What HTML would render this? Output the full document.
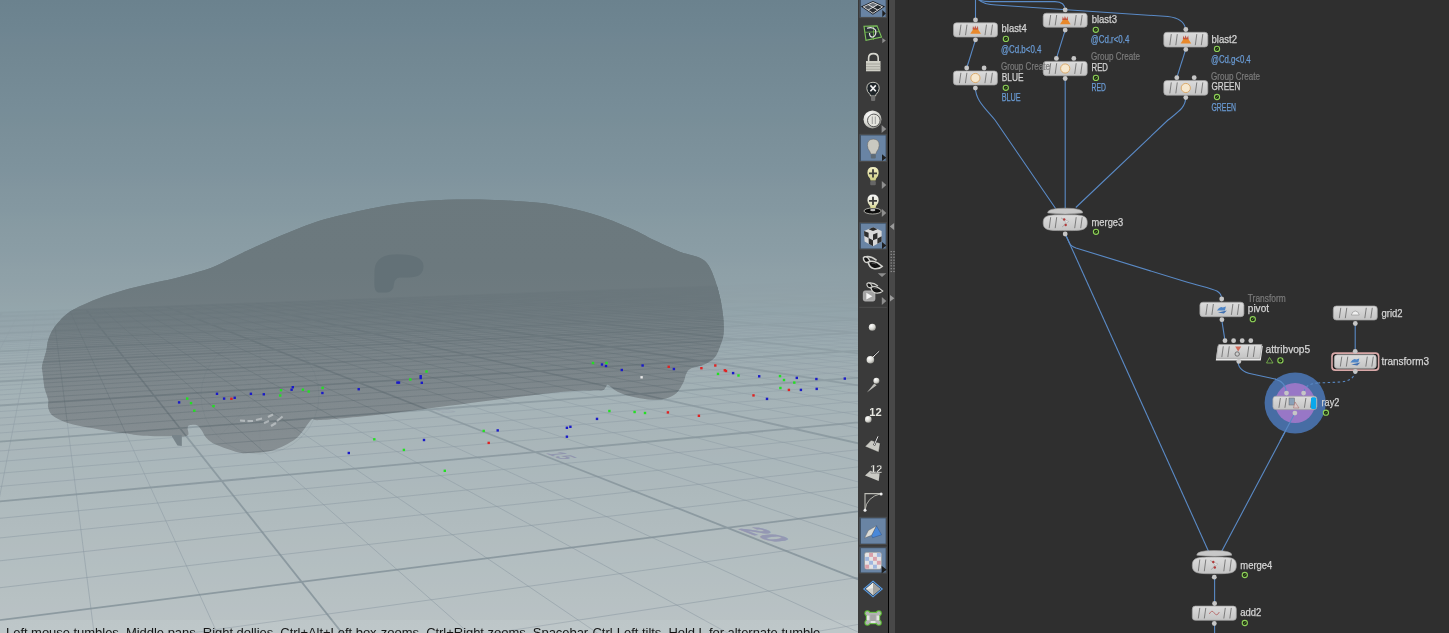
<!DOCTYPE html>
<html><head><meta charset="utf-8">
<style>
html,body{margin:0;padding:0;width:1449px;height:633px;overflow:hidden;background:#2f2f2f;font-family:"Liberation Sans",sans-serif;}
#vp{position:absolute;left:0;top:0;width:858px;height:633px;overflow:hidden;
 background:linear-gradient(to bottom,#6b828e 0px,#7d929c 160px,#8fa1a8 280px,#a5b3b7 400px,#b9c3c5 633px);}
#vp svg{position:absolute;left:0;top:0;}
#status{position:absolute;left:6px;top:624.5px;font-size:13px;color:#151515;white-space:nowrap;letter-spacing:-0.035px;will-change:transform;}
#tb{position:absolute;left:858px;top:0;width:30px;height:633px;background:#3a3a3a;}
#tbline{position:absolute;left:887.9px;top:0;width:1.2px;height:633px;background:#000;}
#strip{position:absolute;left:889px;top:0;width:5.9px;height:633px;background:#484848;}
#ng{position:absolute;left:895px;top:0;width:554px;height:633px;background:#2f2f2f;overflow:hidden;}
#ng svg{position:absolute;left:-895px;top:0;will-change:transform;}
.lbl{font-size:10px;fill:#d4d4d4;stroke:#d4d4d4;stroke-width:0.25px;}
.lblb{font-size:10px;fill:#6a9bd4;stroke:#6a9bd4;stroke-width:0.25px;}
.lblg{font-size:10px;fill:#7c7c7c;stroke:#7c7c7c;stroke-width:0.2px;}
</style></head><body>
<div id="vp">
<svg width="858" height="633" viewBox="0 0 858 633">
<defs><linearGradient id="bgG" gradientUnits="userSpaceOnUse" x1="0" y1="0" x2="0" y2="633"><stop offset="0.0000" stop-color="#6b828e"/><stop offset="0.0158" stop-color="#6c838f"/><stop offset="0.0316" stop-color="#6d8490"/><stop offset="0.0474" stop-color="#6e8591"/><stop offset="0.0632" stop-color="#708692"/><stop offset="0.0790" stop-color="#718792"/><stop offset="0.0948" stop-color="#728893"/><stop offset="0.1106" stop-color="#738994"/><stop offset="0.1264" stop-color="#748a95"/><stop offset="0.1422" stop-color="#758b96"/><stop offset="0.1580" stop-color="#768c97"/><stop offset="0.1738" stop-color="#778d98"/><stop offset="0.1896" stop-color="#788e98"/><stop offset="0.2054" stop-color="#7a8f99"/><stop offset="0.2212" stop-color="#7b909a"/><stop offset="0.2370" stop-color="#7c919b"/><stop offset="0.2528" stop-color="#7d929c"/><stop offset="0.2686" stop-color="#7e939d"/><stop offset="0.2844" stop-color="#80949e"/><stop offset="0.3002" stop-color="#82969f"/><stop offset="0.3160" stop-color="#8397a0"/><stop offset="0.3318" stop-color="#8498a1"/><stop offset="0.3476" stop-color="#869aa2"/><stop offset="0.3633" stop-color="#889ba3"/><stop offset="0.3791" stop-color="#899ca4"/><stop offset="0.3949" stop-color="#8a9da5"/><stop offset="0.4107" stop-color="#8c9ea6"/><stop offset="0.4265" stop-color="#8ea0a7"/><stop offset="0.4423" stop-color="#8fa1a8"/><stop offset="0.4581" stop-color="#91a2a9"/><stop offset="0.4739" stop-color="#93a4aa"/><stop offset="0.4897" stop-color="#94a6ac"/><stop offset="0.5055" stop-color="#96a7ad"/><stop offset="0.5213" stop-color="#98a8ae"/><stop offset="0.5371" stop-color="#9aaab0"/><stop offset="0.5529" stop-color="#9cacb1"/><stop offset="0.5687" stop-color="#9eadb2"/><stop offset="0.5845" stop-color="#a0aeb3"/><stop offset="0.6003" stop-color="#a1b0b4"/><stop offset="0.6161" stop-color="#a3b2b6"/><stop offset="0.6319" stop-color="#a5b3b7"/><stop offset="0.6477" stop-color="#a6b4b8"/><stop offset="0.6635" stop-color="#a7b4b8"/><stop offset="0.6793" stop-color="#a8b5b9"/><stop offset="0.6951" stop-color="#a9b6b9"/><stop offset="0.7109" stop-color="#aab6ba"/><stop offset="0.7267" stop-color="#aab7bb"/><stop offset="0.7425" stop-color="#abb8bb"/><stop offset="0.7583" stop-color="#acb8bc"/><stop offset="0.7741" stop-color="#adb9bc"/><stop offset="0.7899" stop-color="#aebabd"/><stop offset="0.8057" stop-color="#afbbbe"/><stop offset="0.8215" stop-color="#b0bbbe"/><stop offset="0.8373" stop-color="#b1bcbf"/><stop offset="0.8531" stop-color="#b2bdbf"/><stop offset="0.8689" stop-color="#b3bdc0"/><stop offset="0.8847" stop-color="#b3bec1"/><stop offset="0.9005" stop-color="#b4bfc1"/><stop offset="0.9163" stop-color="#b5bfc2"/><stop offset="0.9321" stop-color="#b6c0c2"/><stop offset="0.9479" stop-color="#b7c1c3"/><stop offset="0.9637" stop-color="#b8c1c4"/><stop offset="0.9795" stop-color="#b9c2c4"/><stop offset="0.9953" stop-color="#bac3c5"/></linearGradient><linearGradient id="fogG" gradientUnits="userSpaceOnUse" x1="0" y1="0" x2="0" y2="633"><stop offset="0.0000" stop-color="#6b828e" stop-opacity="1.000"/><stop offset="0.0158" stop-color="#6c838f" stop-opacity="1.000"/><stop offset="0.0316" stop-color="#6d8490" stop-opacity="1.000"/><stop offset="0.0474" stop-color="#6e8591" stop-opacity="1.000"/><stop offset="0.0632" stop-color="#708692" stop-opacity="1.000"/><stop offset="0.0790" stop-color="#718792" stop-opacity="1.000"/><stop offset="0.0948" stop-color="#728893" stop-opacity="1.000"/><stop offset="0.1106" stop-color="#738994" stop-opacity="1.000"/><stop offset="0.1264" stop-color="#748a95" stop-opacity="1.000"/><stop offset="0.1422" stop-color="#758b96" stop-opacity="1.000"/><stop offset="0.1580" stop-color="#768c97" stop-opacity="1.000"/><stop offset="0.1738" stop-color="#778d98" stop-opacity="1.000"/><stop offset="0.1896" stop-color="#788e98" stop-opacity="1.000"/><stop offset="0.2054" stop-color="#7a8f99" stop-opacity="1.000"/><stop offset="0.2212" stop-color="#7b909a" stop-opacity="1.000"/><stop offset="0.2370" stop-color="#7c919b" stop-opacity="1.000"/><stop offset="0.2528" stop-color="#7d929c" stop-opacity="1.000"/><stop offset="0.2686" stop-color="#7e939d" stop-opacity="1.000"/><stop offset="0.2844" stop-color="#80949e" stop-opacity="1.000"/><stop offset="0.3002" stop-color="#82969f" stop-opacity="1.000"/><stop offset="0.3160" stop-color="#8397a0" stop-opacity="1.000"/><stop offset="0.3318" stop-color="#8498a1" stop-opacity="1.000"/><stop offset="0.3476" stop-color="#869aa2" stop-opacity="1.000"/><stop offset="0.3633" stop-color="#889ba3" stop-opacity="1.000"/><stop offset="0.3791" stop-color="#899ca4" stop-opacity="1.000"/><stop offset="0.3949" stop-color="#8a9da5" stop-opacity="1.000"/><stop offset="0.4107" stop-color="#8c9ea6" stop-opacity="1.000"/><stop offset="0.4265" stop-color="#8ea0a7" stop-opacity="1.000"/><stop offset="0.4423" stop-color="#8fa1a8" stop-opacity="0.965"/><stop offset="0.4581" stop-color="#91a2a9" stop-opacity="0.930"/><stop offset="0.4739" stop-color="#93a4aa" stop-opacity="0.870"/><stop offset="0.4897" stop-color="#94a6ac" stop-opacity="0.787"/><stop offset="0.5055" stop-color="#96a7ad" stop-opacity="0.680"/><stop offset="0.5213" stop-color="#98a8ae" stop-opacity="0.593"/><stop offset="0.5371" stop-color="#9aaab0" stop-opacity="0.518"/><stop offset="0.5529" stop-color="#9cacb1" stop-opacity="0.453"/><stop offset="0.5687" stop-color="#9eadb2" stop-opacity="0.402"/><stop offset="0.5845" stop-color="#a0aeb3" stop-opacity="0.367"/><stop offset="0.6003" stop-color="#a1b0b4" stop-opacity="0.331"/><stop offset="0.6161" stop-color="#a3b2b6" stop-opacity="0.296"/><stop offset="0.6319" stop-color="#a5b3b7" stop-opacity="0.260"/><stop offset="0.6477" stop-color="#a6b4b8" stop-opacity="0.236"/><stop offset="0.6635" stop-color="#a7b4b8" stop-opacity="0.212"/><stop offset="0.6793" stop-color="#a8b5b9" stop-opacity="0.188"/><stop offset="0.6951" stop-color="#a9b6b9" stop-opacity="0.164"/><stop offset="0.7109" stop-color="#aab6ba" stop-opacity="0.140"/><stop offset="0.7267" stop-color="#aab7bb" stop-opacity="0.127"/><stop offset="0.7425" stop-color="#abb8bb" stop-opacity="0.114"/><stop offset="0.7583" stop-color="#acb8bc" stop-opacity="0.101"/><stop offset="0.7741" stop-color="#adb9bc" stop-opacity="0.089"/><stop offset="0.7899" stop-color="#aebabd" stop-opacity="0.076"/><stop offset="0.8057" stop-color="#afbbbe" stop-opacity="0.063"/><stop offset="0.8215" stop-color="#b0bbbe" stop-opacity="0.050"/><stop offset="0.8373" stop-color="#b1bcbf" stop-opacity="0.042"/><stop offset="0.8531" stop-color="#b2bdbf" stop-opacity="0.033"/><stop offset="0.8689" stop-color="#b3bdc0" stop-opacity="0.025"/><stop offset="0.8847" stop-color="#b3bec1" stop-opacity="0.017"/><stop offset="0.9005" stop-color="#b4bfc1" stop-opacity="0.008"/><stop offset="0.9163" stop-color="#b5bfc2" stop-opacity="0.000"/><stop offset="0.9321" stop-color="#b6c0c2" stop-opacity="0.000"/><stop offset="0.9479" stop-color="#b7c1c3" stop-opacity="0.000"/><stop offset="0.9637" stop-color="#b8c1c4" stop-opacity="0.000"/><stop offset="0.9795" stop-color="#b9c2c4" stop-opacity="0.000"/><stop offset="0.9953" stop-color="#bac3c5" stop-opacity="0.000"/></linearGradient>
<linearGradient id="carG" gradientUnits="userSpaceOnUse" x1="0" y1="200" x2="0" y2="455"><stop offset="0" stop-color="#66757a"/><stop offset="0.35" stop-color="#6c797e"/><stop offset="0.6" stop-color="#7a8489"/><stop offset="1" stop-color="#878f93"/></linearGradient>
<linearGradient id="carFog" gradientUnits="userSpaceOnUse" x1="0" y1="0" x2="0" y2="633"><stop offset="0" stop-color="#6a787d" stop-opacity="1"/><stop offset="0.4265" stop-color="#6c797e" stop-opacity="1"/><stop offset="0.4739" stop-color="#6f7b80" stop-opacity="0.75"/><stop offset="0.5371" stop-color="#768186" stop-opacity="0.35"/><stop offset="0.6319" stop-color="#7e888c" stop-opacity="0.1"/><stop offset="0.6951" stop-color="#818a8e" stop-opacity="0"/></linearGradient>
<clipPath id="carClip"><path d="M42.1,365.7C42.8,362.0 45.5,353.9 46.4,350.0C47.3,346.1 46.8,345.0 47.6,342.0C48.4,339.0 49.7,335.0 51.4,331.9C53.1,328.8 55.2,326.1 57.7,323.1C60.2,320.2 63.0,316.9 66.6,314.2C70.2,311.4 73.9,309.2 79.2,306.6C84.5,304.0 90.8,301.1 98.2,298.4C105.6,295.7 115.1,292.6 123.5,290.2C131.9,287.8 140.1,285.9 148.7,283.9C157.3,281.9 167.1,280.1 175.0,278.2C182.9,276.3 189.8,274.3 196.0,272.5C202.2,270.7 206.0,269.9 212.0,267.5C218.0,265.1 224.7,261.5 232.0,258.0C239.3,254.5 244.5,251.6 255.6,246.7C266.7,241.8 285.9,233.3 298.4,228.5C310.9,223.7 316.2,221.6 330.5,217.8C344.8,214.1 368.0,208.8 384.0,206.0C400.0,203.2 410.7,201.8 426.7,200.7C442.7,199.6 461.8,199.3 480.0,199.6C498.2,199.9 521.3,201.1 536.0,202.5C550.7,203.9 557.3,205.5 568.0,207.8C578.7,210.1 589.3,212.8 600.0,216.3C610.7,219.9 623.1,225.2 632.0,229.1C640.9,233.0 646.2,236.4 653.3,239.8C660.4,243.2 669.3,247.1 674.6,249.4C679.9,251.7 681.0,252.2 685.3,253.6C689.6,255.0 696.3,255.9 700.2,257.9C704.1,259.9 706.2,261.7 708.7,265.4C711.2,269.1 713.2,275.0 715.1,280.3C717.0,285.6 718.6,291.3 720.0,297.4C721.4,303.5 722.6,310.9 723.2,317.0C723.8,323.1 724.2,328.9 723.6,334.0C723.0,339.1 721.2,343.4 719.6,347.4C718.0,351.4 716.9,355.1 714.2,358.0C711.5,360.9 707.5,363.0 703.5,364.8C699.5,366.6 692.9,367.3 690.0,368.9C687.1,370.5 687.1,372.0 686.0,374.2C684.9,376.4 685.0,379.2 683.4,382.3C681.8,385.4 679.5,390.3 676.6,393.0C673.7,395.7 670.0,397.3 666.0,398.4C662.0,399.5 657.9,399.9 652.5,399.7C647.1,399.5 639.5,398.3 633.7,397.0C627.9,395.7 621.9,393.7 617.6,391.7C613.4,389.7 610.2,385.7 608.2,385.0C606.2,384.3 606.4,386.7 605.5,387.6C604.6,388.5 604.8,389.9 602.8,390.3C600.8,390.8 601.2,389.9 593.4,390.3C585.6,390.7 576.5,390.5 556.0,392.6C535.5,394.7 499.1,399.4 470.6,403.0C442.1,406.6 409.9,411.2 385.0,414.0C360.1,416.8 333.0,419.2 321.0,420.0C309.0,420.8 315.2,418.2 313.0,418.8C310.8,419.4 310.9,420.4 308.0,423.8C305.1,427.2 301.3,434.6 295.4,439.0C289.5,443.4 280.2,448.1 272.6,450.4C265.0,452.7 255.8,452.7 250.0,453.0C244.2,453.3 243.7,453.7 238.0,452.3C232.3,450.9 221.1,446.9 215.8,444.5C210.5,442.1 208.8,440.3 206.4,437.9C204.0,435.5 203.2,432.4 201.6,430.3C200.0,428.2 198.9,426.2 196.9,425.3C194.9,424.4 191.1,424.8 189.5,425.2C187.9,425.6 187.9,426.3 187.6,428.0C187.2,429.7 189.9,434.1 187.4,435.5C184.9,436.9 179.8,436.3 172.5,436.3C165.2,436.3 151.4,436.2 143.4,435.7C135.4,435.2 131.9,434.2 124.5,433.2C117.1,432.1 107.0,430.7 99.2,429.4C91.4,428.1 84.0,427.1 77.7,425.6C71.4,424.1 65.7,422.4 61.3,420.5C56.9,418.6 53.4,416.5 51.2,414.2C49.0,411.9 48.5,408.9 48.0,406.6C47.5,404.3 48.8,403.2 48.3,400.3C47.8,397.4 45.6,392.1 44.8,389.0C44.0,385.9 44.0,384.2 43.6,381.4C43.2,378.6 42.8,374.6 42.5,372.0C42.2,369.4 41.5,369.4 42.1,365.7Z"/></clipPath>
</defs>
<rect x="0" y="0" width="858" height="633" fill="url(#bgG)"/>
<path d="M1074.8,273.5L-1163.7,356.4 M1085.2,273.6L-1188.0,358.3 M1095.9,273.8L-1213.2,360.3 M1106.7,273.9L-1239.6,362.4 M1129.2,274.2L-1295.6,366.9 M1140.8,274.4L-1325.5,369.3 M1152.6,274.5L-1356.8,371.8 M1164.7,274.7L-1389.5,374.4 M1189.7,275.0L-1459.8,380.1 M1202.6,275.2L-1497.5,383.1 M1215.8,275.4L-1537.3,386.3 M1229.4,275.6L-1579.1,389.6 M1257.4,276.0L-1669.7,396.9 M1271.9,276.2L-1718.9,400.8 M1286.7,276.4L-1771.0,405.0 M1302.0,276.6L-1826.3,409.4 M1333.6,277.0L-1947.6,419.1 M1350.0,277.2L-2014.3,424.4 M1366.8,277.4L-2085.7,430.1 M1384.0,277.7L-2162.2,436.2 M1420.0,278.2L-2332.9,449.9 M1438.7,278.4L-2428.5,457.5 M1457.9,278.7L-2532.2,465.8 M1477.6,278.9L-2644.9,474.9 M1518.8,279.5L-2902.7,495.5 M1540.3,279.8L-2995.1,504.6 M1562.5,280.1L-2979.9,508.6 M1585.3,280.4L-2993.1,514.4 M1633.0,281.0L-2990.8,525.3 M1658.0,281.4L-2973.7,530.5 M1683.8,281.7L-2988.3,537.7 M1710.5,282.1L-2970.0,543.5 M1766.4,282.8L-2965.9,558.2 M1795.9,283.2L-2982.2,567.5 M1826.3,283.7L-2999.9,577.5 M1857.8,284.1L-2978.5,585.8 M1924.3,285.0L-2974.1,607.1 M1959.5,285.5L-2994.4,620.7 M1995.9,285.9L-2969.0,632.3 M2033.8,286.5L-2991.0,648.4 M2114.2,287.5L-2986.7,681.9 M2156.8,288.1L-2955.3,699.0 M2201.3,288.7L-2981.5,723.1 M2247.6,289.4L-2946.0,744.6 M2346.7,290.7L-2934.1,802.9 M2399.6,291.4L-2966.5,842.7 M2455.0,292.2L-2918.3,880.1 M2513.1,292.9L-2954.9,934.4 M2638.1,294.6L-2938.4,1065.7 M2705.5,295.5L-2991.4,1164.9 M2776.4,296.5L-2912.7,1269.1 M2851.3,297.5L-2978.4,1436.0 M3014.1,299.7L-2953.0,1966.2 M3102.7,300.9L-2767.3,2422.6 M3196.9,302.2L-2881.2,3466.1 M3297.0,303.5L-370.5,3823.3 M3517.6,306.5L3991.8,881.1 M3639.6,308.2L3998.0,505.3 M3770.4,309.9L3999.9,390.4 M3911.1,311.8L3998.6,334.1 M1056.4,273.7L3993.2,314.6 M1048.1,274.0L3962.4,315.8 M1039.9,274.3L3969.9,317.5 M1031.5,274.6L3977.6,319.4 M1014.7,275.2L3993.6,323.2 M1006.2,275.5L3960.9,324.5 M997.6,275.8L3968.8,326.5 M989.0,276.1L3977.0,328.6 M971.5,276.8L3994.1,332.9 M962.7,277.1L3959.2,334.4 M953.8,277.4L3967.7,336.7 M944.9,277.8L3976.4,339.1 M926.8,278.4L3994.7,344.1 M917.6,278.8L3957.3,345.7 M908.4,279.1L3966.3,348.3 M899.1,279.4L3975.6,351.1 M880.4,280.1L3995.3,356.9 M870.9,280.5L3955.1,358.6 M861.3,280.8L3964.8,361.8 M851.7,281.2L3974.8,365.0 M832.2,281.9L3996.0,371.8 M822.4,282.3L3952.5,373.8 M812.4,282.6L3963.0,377.4 M802.4,283.0L3973.8,381.2 M782.2,283.7L3996.9,389.3 M771.9,284.1L3949.5,391.6 M761.6,284.5L3960.8,396.0 M751.2,284.9L3972.6,400.5 M730.2,285.7L3997.9,410.3 M719.5,286.1L3945.9,412.9 M708.8,286.4L3958.2,418.2 M698.0,286.8L3971.2,423.8 M676.1,287.7L3999.1,435.8 M665.0,288.1L3941.5,438.9 M653.8,288.5L3955.1,445.5 M642.5,288.9L3969.5,452.4 M619.7,289.7L3921.6,463.3 M608.2,290.1L3936.0,471.2 M596.6,290.6L3951.2,479.6 M584.8,291.0L3967.3,488.5 M561.1,291.9L3912.9,502.3 M549.0,292.3L3928.9,512.5 M536.9,292.8L3946.1,523.5 M524.7,293.2L3964.5,535.2 M499.9,294.1L3901.4,553.4 M487.3,294.6L3919.7,567.2 M474.6,295.1L3939.3,582.2 M461.9,295.5L3960.6,598.3 M436.0,296.5L3885.7,623.3 M422.9,297.0L3906.8,643.0 M409.6,297.5L3929.8,664.6 M396.3,297.9L3955.2,688.3 M369.2,298.9L3862.9,725.0 M355.5,299.4L3887.8,755.1 M341.7,300.0L3915.5,788.7 M327.8,300.5L3946.8,826.6 M299.5,301.5L3826.8,886.1 M285.1,302.0L3856.8,937.5 M270.6,302.6L3891.5,997.0 M256.0,303.1L3932.2,1066.7 M226.4,304.2L3760.8,1180.7 M211.4,304.8L3797.4,1287.1 M196.2,305.3L3842.8,1419.0 M180.9,305.9L3900.5,1586.9 M149.8,307.0L3601.5,1891.2 M134.1,307.6L3637.6,2227.9 M118.2,308.2L3691.5,2730.5 M102.1,308.8L3780.5,3561.5 M69.5,310.0L1500.9,3441.7 M53.0,310.6L493.2,3768.9 M36.3,311.2L-561.7,3333.3 M19.4,311.8L-1703.0,3633.7 M-14.9,313.1L-2540.8,2516.2 M-32.2,313.7L-2974.5,2337.1 M-49.8,314.4L-2953.0,1966.2 M-67.5,315.0L-2938.3,1710.7 M-103.6,316.3L-2919.2,1381.4 M-121.9,317.0L-2912.7,1269.1 M-140.4,317.7L-2907.5,1178.4 M-159.1,318.4L-2903.1,1103.5 M-197.0,319.8L-2896.4,987.2 M-216.3,320.5L-2893.8,941.1 M-235.8,321.2L-2891.4,901.0 M-255.5,321.9L-2889.4,865.8 M-295.6,323.4L-2988.1,825.9 M-315.9,324.2L-2981.2,799.1 M-336.5,324.9L-2975.0,775.1 M-357.3,325.7L-2969.4,753.3 M-399.6,327.2L-2959.6,715.5 M-421.1,328.0L-2955.3,699.0 M-442.9,328.8L-2951.4,683.8 M-464.9,329.6L-2947.8,669.8 M-509.7,331.3L-2941.3,644.9 M-532.4,332.1L-2938.4,633.7 M-555.5,333.0L-2999.1,630.9 M-578.8,333.8L-2994.4,620.7 M-626.2,335.6L-2986.0,602.2 M-650.4,336.5L-2982.1,593.8 M-674.8,337.4L-2978.5,585.8 M-699.6,338.3L-2975.1,578.3 M-750.0,340.1L-2968.8,564.6 M-775.6,341.1L-2965.9,558.2 M-801.6,342.0L-2963.1,552.2 M-827.9,343.0L-2960.5,546.5 M-881.5,345.0L-2955.6,535.9 M-908.8,346.0L-2997.1,534.9 M-936.4,347.0L-2993.9,530.0 M-964.5,348.0L-2990.8,525.3 M-1021.6,350.1L-2985.1,516.6 M-1050.7,351.2L-2982.5,512.5 M-1080.2,352.3L-2979.9,508.6 M-1110.1,353.4L-2977.4,504.9" stroke="#8796a0" stroke-width="1" fill="none" opacity="0.5"/>
<path d="M1064.5,273.4L-1140.4,354.5 M1117.8,274.1L-1267.0,364.6 M1177.1,274.9L-1423.8,377.2 M1243.2,275.8L-1623.2,393.1 M1317.6,276.8L-1885.0,414.1 M1401.8,277.9L-2244.4,442.8 M1497.9,279.2L-2767.9,484.7 M1608.8,280.7L-2977.0,518.9 M1738.0,282.5L-2985.5,551.6 M1890.5,284.5L-2997.4,597.4 M2073.2,287.0L-2962.8,662.4 M2296.1,290.0L-2975.0,775.1 M2574.0,293.8L-2999.3,1000.2 M2930.4,298.6L-2867.6,1627.0 M3403.7,305.0L2943.6,3919.6 M1064.5,273.4L3985.5,312.9 M1023.1,274.9L3985.5,321.3 M980.3,276.5L3985.4,330.7 M935.9,278.1L3985.4,341.5 M889.8,279.8L3985.3,353.9 M842.0,281.5L3985.2,368.3 M792.3,283.4L3985.1,385.2 M740.7,285.3L3985.0,405.3 M687.1,287.2L3984.8,429.7 M631.2,289.3L3984.7,459.7 M573.0,291.4L3984.4,497.9 M512.3,293.7L3984.1,547.8 M449.0,296.0L3983.7,615.9 M382.8,298.4L3983.1,714.4 M313.7,301.0L3982.2,869.5 M241.3,303.7L3980.5,1149.6 M165.4,306.4L3976.5,1807.7 M85.9,309.4L2943.6,3919.6 M2.4,312.4L-2436.9,3234.8 M-85.5,315.7L-2927.4,1523.9 M-177.9,319.1L-2899.5,1040.7 M-275.4,322.7L-2995.9,855.9 M-378.3,326.5L-2964.3,733.6 M-487.1,330.5L-2944.4,656.9 M-602.4,334.7L-2990.1,611.2 M-724.6,339.2L-2971.8,571.3 M-854.5,344.0L-2958.0,541.0 M-992.8,349.1L-2987.9,520.9 M-1140.4,354.5L-2975.1,501.3" stroke="#7e8c94" stroke-width="1.8" fill="none" opacity="0.75"/>
<rect x="0" y="0" width="858" height="633" fill="url(#fogG)"/>
<path d="M42.1,365.7C42.8,362.0 45.5,353.9 46.4,350.0C47.3,346.1 46.8,345.0 47.6,342.0C48.4,339.0 49.7,335.0 51.4,331.9C53.1,328.8 55.2,326.1 57.7,323.1C60.2,320.2 63.0,316.9 66.6,314.2C70.2,311.4 73.9,309.2 79.2,306.6C84.5,304.0 90.8,301.1 98.2,298.4C105.6,295.7 115.1,292.6 123.5,290.2C131.9,287.8 140.1,285.9 148.7,283.9C157.3,281.9 167.1,280.1 175.0,278.2C182.9,276.3 189.8,274.3 196.0,272.5C202.2,270.7 206.0,269.9 212.0,267.5C218.0,265.1 224.7,261.5 232.0,258.0C239.3,254.5 244.5,251.6 255.6,246.7C266.7,241.8 285.9,233.3 298.4,228.5C310.9,223.7 316.2,221.6 330.5,217.8C344.8,214.1 368.0,208.8 384.0,206.0C400.0,203.2 410.7,201.8 426.7,200.7C442.7,199.6 461.8,199.3 480.0,199.6C498.2,199.9 521.3,201.1 536.0,202.5C550.7,203.9 557.3,205.5 568.0,207.8C578.7,210.1 589.3,212.8 600.0,216.3C610.7,219.9 623.1,225.2 632.0,229.1C640.9,233.0 646.2,236.4 653.3,239.8C660.4,243.2 669.3,247.1 674.6,249.4C679.9,251.7 681.0,252.2 685.3,253.6C689.6,255.0 696.3,255.9 700.2,257.9C704.1,259.9 706.2,261.7 708.7,265.4C711.2,269.1 713.2,275.0 715.1,280.3C717.0,285.6 718.6,291.3 720.0,297.4C721.4,303.5 722.6,310.9 723.2,317.0C723.8,323.1 724.2,328.9 723.6,334.0C723.0,339.1 721.2,343.4 719.6,347.4C718.0,351.4 716.9,355.1 714.2,358.0C711.5,360.9 707.5,363.0 703.5,364.8C699.5,366.6 692.9,367.3 690.0,368.9C687.1,370.5 687.1,372.0 686.0,374.2C684.9,376.4 685.0,379.2 683.4,382.3C681.8,385.4 679.5,390.3 676.6,393.0C673.7,395.7 670.0,397.3 666.0,398.4C662.0,399.5 657.9,399.9 652.5,399.7C647.1,399.5 639.5,398.3 633.7,397.0C627.9,395.7 621.9,393.7 617.6,391.7C613.4,389.7 610.2,385.7 608.2,385.0C606.2,384.3 606.4,386.7 605.5,387.6C604.6,388.5 604.8,389.9 602.8,390.3C600.8,390.8 601.2,389.9 593.4,390.3C585.6,390.7 576.5,390.5 556.0,392.6C535.5,394.7 499.1,399.4 470.6,403.0C442.1,406.6 409.9,411.2 385.0,414.0C360.1,416.8 333.0,419.2 321.0,420.0C309.0,420.8 315.2,418.2 313.0,418.8C310.8,419.4 310.9,420.4 308.0,423.8C305.1,427.2 301.3,434.6 295.4,439.0C289.5,443.4 280.2,448.1 272.6,450.4C265.0,452.7 255.8,452.7 250.0,453.0C244.2,453.3 243.7,453.7 238.0,452.3C232.3,450.9 221.1,446.9 215.8,444.5C210.5,442.1 208.8,440.3 206.4,437.9C204.0,435.5 203.2,432.4 201.6,430.3C200.0,428.2 198.9,426.2 196.9,425.3C194.9,424.4 191.1,424.8 189.5,425.2C187.9,425.6 187.9,426.3 187.6,428.0C187.2,429.7 189.9,434.1 187.4,435.5C184.9,436.9 179.8,436.3 172.5,436.3C165.2,436.3 151.4,436.2 143.4,435.7C135.4,435.2 131.9,434.2 124.5,433.2C117.1,432.1 107.0,430.7 99.2,429.4C91.4,428.1 84.0,427.1 77.7,425.6C71.4,424.1 65.7,422.4 61.3,420.5C56.9,418.6 53.4,416.5 51.2,414.2C49.0,411.9 48.5,408.9 48.0,406.6C47.5,404.3 48.8,403.2 48.3,400.3C47.8,397.4 45.6,392.1 44.8,389.0C44.0,385.9 44.0,384.2 43.6,381.4C43.2,378.6 42.8,374.6 42.5,372.0C42.2,369.4 41.5,369.4 42.1,365.7Z" fill="url(#carG)"/>
<g clip-path="url(#carClip)">
<path d="M1074.8,273.5L-1163.7,356.4 M1085.2,273.6L-1188.0,358.3 M1095.9,273.8L-1213.2,360.3 M1106.7,273.9L-1239.6,362.4 M1129.2,274.2L-1295.6,366.9 M1140.8,274.4L-1325.5,369.3 M1152.6,274.5L-1356.8,371.8 M1164.7,274.7L-1389.5,374.4 M1189.7,275.0L-1459.8,380.1 M1202.6,275.2L-1497.5,383.1 M1215.8,275.4L-1537.3,386.3 M1229.4,275.6L-1579.1,389.6 M1257.4,276.0L-1669.7,396.9 M1271.9,276.2L-1718.9,400.8 M1286.7,276.4L-1771.0,405.0 M1302.0,276.6L-1826.3,409.4 M1333.6,277.0L-1947.6,419.1 M1350.0,277.2L-2014.3,424.4 M1366.8,277.4L-2085.7,430.1 M1384.0,277.7L-2162.2,436.2 M1420.0,278.2L-2332.9,449.9 M1438.7,278.4L-2428.5,457.5 M1457.9,278.7L-2532.2,465.8 M1477.6,278.9L-2644.9,474.9 M1518.8,279.5L-2902.7,495.5 M1540.3,279.8L-2995.1,504.6 M1562.5,280.1L-2979.9,508.6 M1585.3,280.4L-2993.1,514.4 M1633.0,281.0L-2990.8,525.3 M1658.0,281.4L-2973.7,530.5 M1683.8,281.7L-2988.3,537.7 M1710.5,282.1L-2970.0,543.5 M1766.4,282.8L-2965.9,558.2 M1795.9,283.2L-2982.2,567.5 M1826.3,283.7L-2999.9,577.5 M1857.8,284.1L-2978.5,585.8 M1924.3,285.0L-2974.1,607.1 M1959.5,285.5L-2994.4,620.7 M1995.9,285.9L-2969.0,632.3 M2033.8,286.5L-2991.0,648.4 M2114.2,287.5L-2986.7,681.9 M2156.8,288.1L-2955.3,699.0 M2201.3,288.7L-2981.5,723.1 M2247.6,289.4L-2946.0,744.6 M2346.7,290.7L-2934.1,802.9 M2399.6,291.4L-2966.5,842.7 M2455.0,292.2L-2918.3,880.1 M2513.1,292.9L-2954.9,934.4 M2638.1,294.6L-2938.4,1065.7 M2705.5,295.5L-2991.4,1164.9 M2776.4,296.5L-2912.7,1269.1 M2851.3,297.5L-2978.4,1436.0 M3014.1,299.7L-2953.0,1966.2 M3102.7,300.9L-2767.3,2422.6 M3196.9,302.2L-2881.2,3466.1 M3297.0,303.5L-370.5,3823.3 M3517.6,306.5L3991.8,881.1 M3639.6,308.2L3998.0,505.3 M3770.4,309.9L3999.9,390.4 M3911.1,311.8L3998.6,334.1 M1056.4,273.7L3993.2,314.6 M1048.1,274.0L3962.4,315.8 M1039.9,274.3L3969.9,317.5 M1031.5,274.6L3977.6,319.4 M1014.7,275.2L3993.6,323.2 M1006.2,275.5L3960.9,324.5 M997.6,275.8L3968.8,326.5 M989.0,276.1L3977.0,328.6 M971.5,276.8L3994.1,332.9 M962.7,277.1L3959.2,334.4 M953.8,277.4L3967.7,336.7 M944.9,277.8L3976.4,339.1 M926.8,278.4L3994.7,344.1 M917.6,278.8L3957.3,345.7 M908.4,279.1L3966.3,348.3 M899.1,279.4L3975.6,351.1 M880.4,280.1L3995.3,356.9 M870.9,280.5L3955.1,358.6 M861.3,280.8L3964.8,361.8 M851.7,281.2L3974.8,365.0 M832.2,281.9L3996.0,371.8 M822.4,282.3L3952.5,373.8 M812.4,282.6L3963.0,377.4 M802.4,283.0L3973.8,381.2 M782.2,283.7L3996.9,389.3 M771.9,284.1L3949.5,391.6 M761.6,284.5L3960.8,396.0 M751.2,284.9L3972.6,400.5 M730.2,285.7L3997.9,410.3 M719.5,286.1L3945.9,412.9 M708.8,286.4L3958.2,418.2 M698.0,286.8L3971.2,423.8 M676.1,287.7L3999.1,435.8 M665.0,288.1L3941.5,438.9 M653.8,288.5L3955.1,445.5 M642.5,288.9L3969.5,452.4 M619.7,289.7L3921.6,463.3 M608.2,290.1L3936.0,471.2 M596.6,290.6L3951.2,479.6 M584.8,291.0L3967.3,488.5 M561.1,291.9L3912.9,502.3 M549.0,292.3L3928.9,512.5 M536.9,292.8L3946.1,523.5 M524.7,293.2L3964.5,535.2 M499.9,294.1L3901.4,553.4 M487.3,294.6L3919.7,567.2 M474.6,295.1L3939.3,582.2 M461.9,295.5L3960.6,598.3 M436.0,296.5L3885.7,623.3 M422.9,297.0L3906.8,643.0 M409.6,297.5L3929.8,664.6 M396.3,297.9L3955.2,688.3 M369.2,298.9L3862.9,725.0 M355.5,299.4L3887.8,755.1 M341.7,300.0L3915.5,788.7 M327.8,300.5L3946.8,826.6 M299.5,301.5L3826.8,886.1 M285.1,302.0L3856.8,937.5 M270.6,302.6L3891.5,997.0 M256.0,303.1L3932.2,1066.7 M226.4,304.2L3760.8,1180.7 M211.4,304.8L3797.4,1287.1 M196.2,305.3L3842.8,1419.0 M180.9,305.9L3900.5,1586.9 M149.8,307.0L3601.5,1891.2 M134.1,307.6L3637.6,2227.9 M118.2,308.2L3691.5,2730.5 M102.1,308.8L3780.5,3561.5 M69.5,310.0L1500.9,3441.7 M53.0,310.6L493.2,3768.9 M36.3,311.2L-561.7,3333.3 M19.4,311.8L-1703.0,3633.7 M-14.9,313.1L-2540.8,2516.2 M-32.2,313.7L-2974.5,2337.1 M-49.8,314.4L-2953.0,1966.2 M-67.5,315.0L-2938.3,1710.7 M-103.6,316.3L-2919.2,1381.4 M-121.9,317.0L-2912.7,1269.1 M-140.4,317.7L-2907.5,1178.4 M-159.1,318.4L-2903.1,1103.5 M-197.0,319.8L-2896.4,987.2 M-216.3,320.5L-2893.8,941.1 M-235.8,321.2L-2891.4,901.0 M-255.5,321.9L-2889.4,865.8 M-295.6,323.4L-2988.1,825.9 M-315.9,324.2L-2981.2,799.1 M-336.5,324.9L-2975.0,775.1 M-357.3,325.7L-2969.4,753.3 M-399.6,327.2L-2959.6,715.5 M-421.1,328.0L-2955.3,699.0 M-442.9,328.8L-2951.4,683.8 M-464.9,329.6L-2947.8,669.8 M-509.7,331.3L-2941.3,644.9 M-532.4,332.1L-2938.4,633.7 M-555.5,333.0L-2999.1,630.9 M-578.8,333.8L-2994.4,620.7 M-626.2,335.6L-2986.0,602.2 M-650.4,336.5L-2982.1,593.8 M-674.8,337.4L-2978.5,585.8 M-699.6,338.3L-2975.1,578.3 M-750.0,340.1L-2968.8,564.6 M-775.6,341.1L-2965.9,558.2 M-801.6,342.0L-2963.1,552.2 M-827.9,343.0L-2960.5,546.5 M-881.5,345.0L-2955.6,535.9 M-908.8,346.0L-2997.1,534.9 M-936.4,347.0L-2993.9,530.0 M-964.5,348.0L-2990.8,525.3 M-1021.6,350.1L-2985.1,516.6 M-1050.7,351.2L-2982.5,512.5 M-1080.2,352.3L-2979.9,508.6 M-1110.1,353.4L-2977.4,504.9" stroke="#4f5d64" stroke-width="1" fill="none" opacity="0.27"/>
<path d="M1064.5,273.4L-1140.4,354.5 M1117.8,274.1L-1267.0,364.6 M1177.1,274.9L-1423.8,377.2 M1243.2,275.8L-1623.2,393.1 M1317.6,276.8L-1885.0,414.1 M1401.8,277.9L-2244.4,442.8 M1497.9,279.2L-2767.9,484.7 M1608.8,280.7L-2977.0,518.9 M1738.0,282.5L-2985.5,551.6 M1890.5,284.5L-2997.4,597.4 M2073.2,287.0L-2962.8,662.4 M2296.1,290.0L-2975.0,775.1 M2574.0,293.8L-2999.3,1000.2 M2930.4,298.6L-2867.6,1627.0 M3403.7,305.0L2943.6,3919.6 M1064.5,273.4L3985.5,312.9 M1023.1,274.9L3985.5,321.3 M980.3,276.5L3985.4,330.7 M935.9,278.1L3985.4,341.5 M889.8,279.8L3985.3,353.9 M842.0,281.5L3985.2,368.3 M792.3,283.4L3985.1,385.2 M740.7,285.3L3985.0,405.3 M687.1,287.2L3984.8,429.7 M631.2,289.3L3984.7,459.7 M573.0,291.4L3984.4,497.9 M512.3,293.7L3984.1,547.8 M449.0,296.0L3983.7,615.9 M382.8,298.4L3983.1,714.4 M313.7,301.0L3982.2,869.5 M241.3,303.7L3980.5,1149.6 M165.4,306.4L3976.5,1807.7 M85.9,309.4L2943.6,3919.6 M2.4,312.4L-2436.9,3234.8 M-85.5,315.7L-2927.4,1523.9 M-177.9,319.1L-2899.5,1040.7 M-275.4,322.7L-2995.9,855.9 M-378.3,326.5L-2964.3,733.6 M-487.1,330.5L-2944.4,656.9 M-602.4,334.7L-2990.1,611.2 M-724.6,339.2L-2971.8,571.3 M-854.5,344.0L-2958.0,541.0 M-992.8,349.1L-2987.9,520.9 M-1140.4,354.5L-2975.1,501.3" stroke="#4f5d64" stroke-width="1.6" fill="none" opacity="0.42"/>
<rect x="0" y="0" width="858" height="633" fill="url(#carFog)"/>
</g>
<path d="M172,435 L181.8,435 L181.8,446 L177.5,445.5 Q174,440 172,436.5Z" fill="#78848a"/>
<path d="M378,292.5 Q374.3,291 374.3,284 L374.5,270 Q375.5,254.2 397,254.2 Q423.5,254.5 423.5,266 Q423.5,277.7 408,277.5 L400,277.5 Q394.6,278 394,284 Q393.5,292.5 386,292.5Z" fill="#627075" opacity="0.85"/>
<ellipse cx="260" cy="395.5" rx="59" ry="58.5" fill="none" stroke="#5e6a70" stroke-width="1" opacity="0.12"/>
<path d="M260,337 L260,454 M201,395 L319,395 M218,354 L302,437 M218,437 L302,354" stroke="#5e6a70" stroke-width="0.8" opacity="0.06"/>
<path d="M240,420.5 L245,420.8 M247.5,421.2 L253,421 M256,420 L262,418.5 M264,423 L269,421 M268,417 L273,414.5 M271,426 L276,423 M277,421 L282.5,416.5" stroke="#d2d6d8" stroke-width="2.2" opacity="0.6"/>
<text x="0" y="0" transform="matrix(0.74,0.28,-1.195,0.1125,545,453.3)" font-family="Liberation Sans" font-weight="bold" font-size="20" fill="#8c8fac" opacity="0.8">15</text>
<text x="0" y="0" transform="matrix(1.62,0.62,-1.38,0.18,737.5,528.8)" font-family="Liberation Sans" font-weight="bold" font-size="20" fill="#9194b2" stroke="#9194b2" stroke-width="0.6" opacity="0.9">20</text>
<text x="0" y="0" transform="matrix(0.44,0.165,-0.96,0.072,434,409.5)" font-family="Liberation Sans" font-weight="bold" font-size="20" fill="#98a2ae" opacity="0.6">10</text>
<rect x="177.9" y="401.2" width="2.4" height="2.4" fill="#1a1ac8"/>
<rect x="186.0" y="397.4" width="2.4" height="2.4" fill="#22e022"/>
<rect x="189.8" y="401.9" width="2.4" height="2.4" fill="#22e022"/>
<rect x="193.1" y="409.5" width="2.4" height="2.4" fill="#22e022"/>
<rect x="212.3" y="404.9" width="2.4" height="2.4" fill="#22e022"/>
<rect x="215.8" y="392.6" width="2.4" height="2.4" fill="#1a1ac8"/>
<rect x="222.9" y="397.4" width="2.4" height="2.4" fill="#1a1ac8"/>
<rect x="230.2" y="397.6" width="2.4" height="2.4" fill="#e02222"/>
<rect x="233.5" y="396.6" width="2.4" height="2.4" fill="#1a1ac8"/>
<rect x="249.7" y="392.6" width="2.4" height="2.4" fill="#1a1ac8"/>
<rect x="262.6" y="393.1" width="2.4" height="2.4" fill="#1a1ac8"/>
<rect x="279.8" y="389.0" width="2.4" height="2.4" fill="#22e022"/>
<rect x="279.0" y="394.3" width="2.4" height="2.4" fill="#22e022"/>
<rect x="291.6" y="386.0" width="2.4" height="2.4" fill="#1a1ac8"/>
<rect x="290.4" y="388.5" width="2.4" height="2.4" fill="#1a1ac8"/>
<rect x="301.7" y="388.5" width="2.4" height="2.4" fill="#22e022"/>
<rect x="307.5" y="390.3" width="2.4" height="2.4" fill="#22e022"/>
<rect x="321.4" y="386.7" width="2.4" height="2.4" fill="#22e022"/>
<rect x="321.2" y="391.8" width="2.4" height="2.4" fill="#1a1ac8"/>
<rect x="357.5" y="388.0" width="2.4" height="2.4" fill="#1a1ac8"/>
<rect x="396.2" y="381.4" width="2.4" height="2.4" fill="#1a1ac8"/>
<rect x="397.8" y="381.4" width="2.4" height="2.4" fill="#1a1ac8"/>
<rect x="409.1" y="378.3" width="2.4" height="2.4" fill="#22e022"/>
<rect x="419.5" y="375.0" width="2.4" height="2.4" fill="#1a1ac8"/>
<rect x="419.5" y="376.8" width="2.4" height="2.4" fill="#1a1ac8"/>
<rect x="420.6" y="381.6" width="2.4" height="2.4" fill="#1a1ac8"/>
<rect x="425.3" y="370.3" width="2.4" height="2.4" fill="#22e022"/>
<rect x="373.1" y="438.1" width="2.4" height="2.4" fill="#22e022"/>
<rect x="347.6" y="451.8" width="2.4" height="2.4" fill="#1a1ac8"/>
<rect x="402.7" y="448.7" width="2.4" height="2.4" fill="#22e022"/>
<rect x="422.8" y="438.8" width="2.4" height="2.4" fill="#1a1ac8"/>
<rect x="482.5" y="429.7" width="2.4" height="2.4" fill="#22e022"/>
<rect x="496.5" y="429.2" width="2.4" height="2.4" fill="#1a1ac8"/>
<rect x="487.5" y="441.7" width="2.4" height="2.4" fill="#e02222"/>
<rect x="591.8" y="361.8" width="2.4" height="2.4" fill="#22e022"/>
<rect x="600.8" y="363.3" width="2.4" height="2.4" fill="#1a1ac8"/>
<rect x="604.8" y="364.8" width="2.4" height="2.4" fill="#1a1ac8"/>
<rect x="605.3" y="361.8" width="2.4" height="2.4" fill="#22e022"/>
<rect x="620.6" y="368.8" width="2.4" height="2.4" fill="#1a1ac8"/>
<rect x="641.4" y="364.3" width="2.4" height="2.4" fill="#1a1ac8"/>
<rect x="640.4" y="376.1" width="2.4" height="2.4" fill="#e8e8e8"/>
<rect x="667.5" y="365.6" width="2.4" height="2.4" fill="#e02222"/>
<rect x="672.7" y="367.8" width="2.4" height="2.4" fill="#1a1ac8"/>
<rect x="700.2" y="367.0" width="2.4" height="2.4" fill="#e02222"/>
<rect x="714.1" y="364.3" width="2.4" height="2.4" fill="#e02222"/>
<rect x="723.6" y="369.1" width="2.4" height="2.4" fill="#e02222"/>
<rect x="724.8" y="369.8" width="2.4" height="2.4" fill="#e02222"/>
<rect x="716.8" y="372.7" width="2.4" height="2.4" fill="#22e022"/>
<rect x="731.9" y="371.9" width="2.4" height="2.4" fill="#1a1ac8"/>
<rect x="737.3" y="374.3" width="2.4" height="2.4" fill="#22e022"/>
<rect x="758.0" y="375.1" width="2.4" height="2.4" fill="#1a1ac8"/>
<rect x="778.8" y="374.9" width="2.4" height="2.4" fill="#22e022"/>
<rect x="782.8" y="378.8" width="2.4" height="2.4" fill="#22e022"/>
<rect x="793.1" y="381.4" width="2.4" height="2.4" fill="#22e022"/>
<rect x="795.6" y="376.7" width="2.4" height="2.4" fill="#1a1ac8"/>
<rect x="815.2" y="377.8" width="2.4" height="2.4" fill="#1a1ac8"/>
<rect x="843.6" y="377.4" width="2.4" height="2.4" fill="#1a1ac8"/>
<rect x="779.2" y="386.8" width="2.4" height="2.4" fill="#22e022"/>
<rect x="787.7" y="388.7" width="2.4" height="2.4" fill="#e02222"/>
<rect x="799.7" y="388.7" width="2.4" height="2.4" fill="#1a1ac8"/>
<rect x="815.5" y="387.7" width="2.4" height="2.4" fill="#1a1ac8"/>
<rect x="752.3" y="394.2" width="2.4" height="2.4" fill="#e02222"/>
<rect x="765.8" y="397.7" width="2.4" height="2.4" fill="#1a1ac8"/>
<rect x="666.7" y="411.2" width="2.4" height="2.4" fill="#e02222"/>
<rect x="697.7" y="414.6" width="2.4" height="2.4" fill="#e02222"/>
<rect x="608.2" y="409.8" width="2.4" height="2.4" fill="#22e022"/>
<rect x="633.4" y="410.8" width="2.4" height="2.4" fill="#22e022"/>
<rect x="643.8" y="411.8" width="2.4" height="2.4" fill="#22e022"/>
<rect x="595.8" y="417.7" width="2.4" height="2.4" fill="#1a1ac8"/>
<rect x="565.7" y="426.6" width="2.4" height="2.4" fill="#1a1ac8"/>
<rect x="569.2" y="425.6" width="2.4" height="2.4" fill="#1a1ac8"/>
<rect x="565.7" y="435.5" width="2.4" height="2.4" fill="#1a1ac8"/>
<rect x="443.6" y="469.6" width="2.4" height="2.4" fill="#22e022"/>
<rect x="0" y="620" width="858" height="13" fill="#ffffff" opacity="0.07"/>

</svg>
<div id="status">Left mouse tumbles. Middle pans. Right dollies. Ctrl+Alt+Left box-zooms. Ctrl+Right zooms. Spacebar-Ctrl-Left tilts. Hold L for alternate tumble.</div>
</div>
<div id="tb"></div>
<div id="tbline"></div>
<div id="strip"></div>
<svg style="position:absolute;left:0;top:0" width="1449" height="633" viewBox="0 0 1449 633">
<defs><radialGradient id="sph" cx="0.35" cy="0.3" r="0.8"><stop offset="0" stop-color="#ffffff"/><stop offset="0.6" stop-color="#d6d6d0"/><stop offset="1" stop-color="#8a8a86"/></radialGradient><linearGradient id="bulbY" x1="0" y1="0" x2="0" y2="1"><stop offset="0" stop-color="#f2efc4"/><stop offset="1" stop-color="#cfcf86"/></linearGradient><linearGradient id="bulbW" x1="0" y1="0" x2="0" y2="1"><stop offset="0" stop-color="#f6f6f6"/><stop offset="0.5" stop-color="#e8e8d8"/><stop offset="1" stop-color="#d8d68e"/></linearGradient></defs>
<rect x="859.3" y="-3.0" width="27.6" height="21.1" fill="#4d4d4d"/><rect x="859.8" y="-2.1" width="26.4" height="19.2" fill="#3d4f63"/><rect x="861" y="-1.4" width="24.6" height="18.3" fill="#6984a4"/>
<path d="M863.30,6.80 L872.90,2.40 L882.60,6.80 L872.90,13.30Z" fill="none" stroke="#1a1d22" stroke-width="2.4"/>
<path d="M872.90,2.40 L877.75,4.60 L872.90,7.40 L868.10,4.60Z" fill="#6a7078"/>
<path d="M863.30,6.80 L868.10,4.60 L872.90,7.40 L868.10,10.05Z" fill="#4a5058"/>
<path d="M882.60,6.80 L877.75,4.60 L872.90,7.40 L877.75,10.05Z" fill="#22272c"/>
<path d="M872.90,13.30 L868.10,10.05 L872.90,7.40 L877.75,10.05Z" fill="#2a2e34"/>
<path d="M863.30,6.80 L872.90,2.40 L882.60,6.80 L872.90,13.30Z M868.10,4.60 L877.75,10.05 M877.75,4.60 L868.10,10.05" fill="none" stroke="#e6e6e6" stroke-width="0.9"/>
<path d="M882.3,10 L885.8,13.5 L882.3,17Z" fill="#1e1e1e"/>
<path d="M864,26.2 L877,25.9 L881.5,37 L866,40.4Z" fill="#2a3336" stroke="#7dc45a" stroke-width="1.1"/>
<path d="M865,32.3 L880,31.6 M873.5,26 L873.5,40" stroke="#6fb04a" stroke-width="0.8"/>
<path d="M867,28.3 Q873,26.5 875.5,30 Q877,35 873,37 Q869.5,37.5 869.5,33" fill="none" stroke="#e6e6e6" stroke-width="1.2"/>
<path d="M882.3,38 L885.8,40.6 L882.3,43.3Z" fill="#8e8e8e"/>
<path d="M868.6,61 L868.6,58 Q868.6,53.6 873.4,53.6 Q878.2,53.6 878.2,58 L878.2,61" fill="none" stroke="#d8d8d0" stroke-width="1.6"/>
<rect x="866" y="61" width="14.5" height="10.3" fill="#cfcfc6"/>
<path d="M866,64 L880.5,64 M866,66.7 L880.5,66.7 M866,69.2 L880.5,69.2" stroke="#9a9a92" stroke-width="0.8"/>
<path d="M873,82.3 Q879.2,82.3 879.2,88.5 Q879.2,91.5 876,94.5 L875.5,96 L870.6,96 L870,94.5 Q866.8,91.5 866.8,88.5 Q866.8,82.3 873,82.3Z" fill="#1f2529" stroke="#cfcfc6" stroke-width="0.9"/>
<path d="M870.4,85.4 L875.8,91.2 M875.8,85.4 L870.4,91.2" stroke="#f2f2f2" stroke-width="1.6"/>
<rect x="871" y="96.3" width="4.2" height="4.6" rx="1" fill="#6e6e6e"/>
<circle cx="872.5" cy="119.4" r="9" fill="url(#sph)"/>
<circle cx="873.8" cy="120.4" r="6.3" fill="#e4e4de" stroke="#4a4a4a" stroke-width="0.9"/>
<path d="M872.3,116.5 L872.3,124 M875.3,116.5 L875.3,124" stroke="#8a8a8a" stroke-width="0.8"/>
<path d="M881.6,124.9 L886.3,128.9 L881.6,133Z" fill="#8e8e8e"/>
<rect x="859.3" y="133.9" width="27.6" height="28.0" fill="#4d4d4d"/><rect x="859.8" y="134.8" width="26.4" height="26.1" fill="#3d4f63"/><rect x="861" y="135.5" width="24.6" height="25.2" fill="#6984a4"/>
<path d="M873.3,139.1 Q879.2,139.1 879.2,145.5 Q879.2,148.5 876.5,152 L876,154 L870.6,154 L870.1,152 Q867.4,148.5 867.4,145.5 Q867.4,139.1 873.3,139.1Z" fill="#c9c8c0" stroke="#5a5a5a" stroke-width="0.5"/>
<rect x="870.8" y="154.3" width="5" height="4.3" rx="1" fill="#5e6a74"/>
<path d="M882,154.3 L886.3,157.7 L882,161Z" fill="#1e1e1e"/>
<path d="M873,167.1 Q878.7,167.1 878.7,173 Q878.7,176 876,178.8 L875.6,180.4 L870.5,180.4 L870.1,178.8 Q867.4,176 867.4,173 Q867.4,167.1 873,167.1Z" fill="url(#bulbY)"/>
<path d="M873,169.3 L873,177.5 M869,173.4 L877,173.4" stroke="#3b3b3b" stroke-width="1.8"/>
<rect x="870.2" y="181" width="5.6" height="4.2" rx="1" fill="#666"/>
<path d="M881.8,180.9 L886.3,184.9 L881.8,188.9Z" fill="#8e8e8e"/>
<ellipse cx="872.6" cy="211" rx="8.6" ry="3" fill="#0c0c0c" stroke="#c4c4bc" stroke-width="0.8"/>
<path d="M873,194.6 Q878.7,194.6 878.7,200.5 Q878.7,203.5 876,206.3 L875.6,208 L870.5,208 L870.1,206.3 Q867.4,203.5 867.4,200.5 Q867.4,194.6 873,194.6Z" fill="url(#bulbW)"/>
<path d="M873,196.8 L873,205 M869,200.9 L877,200.9" stroke="#3b3b3b" stroke-width="1.8"/>
<ellipse cx="872.8" cy="210" rx="2.6" ry="1.3" fill="#bcbcbc"/>
<path d="M881.8,208.8 L886.3,212.9 L881.8,216.9Z" fill="#8e8e8e"/>
<rect x="859.3" y="222.1" width="27.6" height="27.5" fill="#4d4d4d"/><rect x="859.8" y="223.0" width="26.4" height="25.6" fill="#3d4f63"/><rect x="861" y="223.7" width="24.6" height="24.7" fill="#6984a4"/>
<path d="M864,231 L873.2,227.3 L881.6,231 L881.6,241.5 L873,246.3 L864.6,241.5Z" fill="#d8d8d8"/>
<path d="M868.6,229.2 L873.2,227.3 L877.4,229.2 L873,231 Z" fill="#2a2a2a"/>
<path d="M864,231 L868.6,232.8 L868.6,238 L864.3,236Z M873,234.5 L877.4,232.8 L877.4,238.5 L873,240.3Z M868.6,238 L873,240.3 L873,246.3 L868.8,243.8Z" fill="#2e2e2e"/>
<path d="M877.4,238.5 L881.6,236.3 L881.6,241.5 L877.4,243.8Z" fill="#303030"/>
<path d="M882,242 L886.3,245.5 L882,249Z" fill="#1e1e1e"/>
<g transform="translate(862.6,255.8) scale(1.0)"><path d="M1.8,1.2 Q8,-0.5 14,4.5" fill="none" stroke="#cfcfcb" stroke-width="1.5"/><path d="M0.8,2 Q2.5,-0.2 5.5,2.2 L7.8,6.2 Q4.2,7.6 2,5.6 Q0.6,4 0.8,2Z" fill="#161616" stroke="#d2d2ce" stroke-width="1.4"/><path d="M5.6,6.2 Q10,4.2 15,7 L19.6,10.6 Q16.5,13.6 11,12.8 Q6.6,11.8 5.6,6.2Z" fill="#121212" stroke="#d2d2ce" stroke-width="1.5"/><path d="M9,7.6 Q11.5,7 13.5,8.2" fill="none" stroke="#6a6a6a" stroke-width="0.7"/></g>
<path d="M877.8,273.2 L886.3,273.2 L882,277Z" fill="#8e8e8e"/>
<rect x="863.3" y="290.9" width="11.6" height="10.2" rx="2" fill="#a4a4a4" stroke="#c4c4c4" stroke-width="0.7"/>
<path d="M866.3,292.8 L866.3,299.6 L872.4,296.2Z" fill="#f4f4f4"/>
<g transform="translate(866.2,282.2) scale(0.84)"><path d="M1.8,1.2 Q8,-0.5 14,4.5" fill="none" stroke="#cfcfcb" stroke-width="1.5"/><path d="M0.8,2 Q2.5,-0.2 5.5,2.2 L7.8,6.2 Q4.2,7.6 2,5.6 Q0.6,4 0.8,2Z" fill="#161616" stroke="#d2d2ce" stroke-width="1.4"/><path d="M5.6,6.2 Q10,4.2 15,7 L19.6,10.6 Q16.5,13.6 11,12.8 Q6.6,11.8 5.6,6.2Z" fill="#121212" stroke="#d2d2ce" stroke-width="1.5"/><path d="M9,7.6 Q11.5,7 13.5,8.2" fill="none" stroke="#6a6a6a" stroke-width="0.7"/></g>
<path d="M881.8,296.9 L886.3,300.9 L881.8,305Z" fill="#8e8e8e"/>
<rect x="859.3" y="306.8" width="27.5" height="1" fill="#4e4e4e"/>
<circle cx="872.3" cy="327.2" r="3.5" fill="url(#sph)"/>
<path d="M871.2,358.8 L879.2,351.2" stroke="#222" stroke-width="2.2"/>
<path d="M871.2,358.8 L879.2,351.2" stroke="#e8e8e8" stroke-width="1"/>
<circle cx="870.4" cy="359.7" r="3.8" fill="url(#sph)"/>
<path d="M871.2,358.8 L875,355.2" stroke="#e8e8e8" stroke-width="1"/>
<path d="M866.9,392.4 L874.2,383.4 L876.6,385.3Z" fill="#bdbdb8"/>
<circle cx="876.4" cy="380.7" r="3" fill="url(#sph)"/>
<text x="869.2" y="416.2" font-family="Liberation Sans" font-weight="bold" font-size="11.5" fill="#e6e6e0" textLength="12.4" lengthAdjust="spacingAndGlyphs">12</text>
<circle cx="868.3" cy="419.4" r="3.3" fill="url(#sph)"/>
<path d="M865,446.5 L871.2,440.3 L880.2,443.2 L878.7,452.2Z" fill="#cacac4" stroke="#1c1c1c" stroke-width="0.4"/>
<path d="M874,445.5 L878,436.3" stroke="#2a2a2a" stroke-width="2"/><path d="M874,445.5 L878,436.3" stroke="#e6e6e6" stroke-width="1"/>
<path d="M865,475.4 L870.2,470.7 L879.7,472.5 L878.7,481.1Z" fill="#cacac4"/>
<text x="870.2" y="472.6" font-family="Liberation Sans" font-weight="bold" font-size="11.5" fill="#e6e6e0" stroke="#333" stroke-width="0.3" textLength="12" lengthAdjust="spacingAndGlyphs">12</text>
<path d="M865,510.2 L865,493.6 L881.1,493.6" fill="none" stroke="#bdbdb6" stroke-width="1.1"/>
<path d="M865,510.2 Q866.5,497 881.1,493.6" fill="none" stroke="#bdbdb6" stroke-width="0.9"/>
<circle cx="881.1" cy="493.9" r="1.5" fill="#eee"/><circle cx="865" cy="510.2" r="1.5" fill="#eee"/>
<rect x="859.3" y="516.8" width="27.6" height="28.0" fill="#4d4d4d"/><rect x="859.8" y="517.7" width="26.4" height="26.1" fill="#3d4f63"/><rect x="861" y="518.4" width="24.6" height="25.2" fill="#6984a4"/>
<path d="M876.4,525.8 L881.6,534.8 L872.6,537.7 L871.6,535.3Z" fill="#4a88d8" stroke="#2a4a78" stroke-width="0.4"/>
<path d="M864.5,538.1 L868.3,530.5 L876.4,525.8 L871.6,535.3Z" fill="#dcdcd6" stroke="#555" stroke-width="0.4"/>
<rect x="859.3" y="546.6" width="27.6" height="27.0" fill="#4d4d4d"/><rect x="859.8" y="547.5" width="26.4" height="25.1" fill="#3d4f63"/><rect x="861" y="548.2" width="24.6" height="24.2" fill="#6984a4"/>
<rect x="864.5" y="552.3" width="17.1" height="17" rx="2.2" fill="#e4e4e4" stroke="#8a8a8a" stroke-width="0.6"/>
<rect x="865.20" y="556.90" width="3.9" height="3.9" fill="#9fb6de"/>
<rect x="865.20" y="564.70" width="3.9" height="3.9" fill="#d9a0aa"/>
<rect x="869.10" y="553.00" width="3.9" height="3.9" fill="#d9a0aa"/>
<rect x="869.10" y="560.80" width="3.9" height="3.9" fill="#9fb6de"/>
<rect x="873.00" y="556.90" width="3.9" height="3.9" fill="#d9a0aa"/>
<rect x="873.00" y="564.70" width="3.9" height="3.9" fill="#9fb6de"/>
<rect x="876.90" y="553.00" width="3.9" height="3.9" fill="#9fb6de"/>
<rect x="876.90" y="560.80" width="3.9" height="3.9" fill="#d9a0aa"/>
<path d="M881.6,565.8 L886.6,569.7 L881.6,573.6Z" fill="#1e1e1e"/>
<path d="M873,581.2 L882.2,589 L873,596.8 L863.8,589Z" fill="#2c3a48" stroke="#5a9ee8" stroke-width="1.1"/>
<path d="M873,582.8 L880.2,589 L873,595.2 L865.8,589Z" fill="#d2d2ce"/><path d="M873,582.8 L873,595.2 L880.2,589Z" fill="#a4a4a0"/><path d="M873,582.8 L865.8,589 L873,588.2Z" fill="#eeeeea"/>
<rect x="865.8" y="613.0" width="14.4" height="10.0" fill="#5cc232"/><rect x="867.0" y="611.8" width="12.0" height="12.4" fill="#5cc232"/><circle cx="867.4" cy="613.2" r="3.0" fill="#5cc232"/><circle cx="878.8" cy="613.2" r="3.0" fill="#5cc232"/><circle cx="878.8" cy="622.8" r="3.0" fill="#5cc232"/><circle cx="867.4" cy="622.8" r="3.0" fill="#5cc232"/>
<rect x="866.8" y="614.0" width="12.4" height="8.0" fill="#b4b4b4"/><rect x="868.0" y="612.8" width="10.0" height="10.4" fill="#b4b4b4"/><circle cx="867.4" cy="613.2" r="2.0" fill="#b4b4b4"/><circle cx="878.8" cy="613.2" r="2.0" fill="#b4b4b4"/><circle cx="878.8" cy="622.8" r="2.0" fill="#b4b4b4"/><circle cx="867.4" cy="622.8" r="2.0" fill="#b4b4b4"/>
<rect x="870.3" y="614.6" width="5.4" height="6.8" fill="#a6a6a6"/><rect x="866.8" y="615.6" width="2.6" height="4.6" fill="#e4e4e4"/><rect x="876.6" y="615.6" width="2.6" height="4.6" fill="#e4e4e4"/><rect x="870.7" y="621" width="4.8" height="2" fill="#e4e4e4"/>
<path d="M894.1,222.9 L889.8,226.5 L894.1,230Z" fill="#9a9a9a"/>
<path d="M890,295 L894.4,298.3 L890,301.6Z" fill="#9a9a9a"/>
<rect x="890.6" y="251.0" width="1.2" height="1.2" fill="#9a9a9a"/><rect x="893.4" y="251.0" width="1.2" height="1.2" fill="#9a9a9a"/>
<rect x="890.6" y="253.8" width="1.2" height="1.2" fill="#9a9a9a"/><rect x="893.4" y="253.8" width="1.2" height="1.2" fill="#9a9a9a"/>
<rect x="890.6" y="256.7" width="1.2" height="1.2" fill="#9a9a9a"/><rect x="893.4" y="256.7" width="1.2" height="1.2" fill="#9a9a9a"/>
<rect x="890.6" y="259.6" width="1.2" height="1.2" fill="#9a9a9a"/><rect x="893.4" y="259.6" width="1.2" height="1.2" fill="#9a9a9a"/>
<rect x="890.6" y="262.4" width="1.2" height="1.2" fill="#9a9a9a"/><rect x="893.4" y="262.4" width="1.2" height="1.2" fill="#9a9a9a"/>
<rect x="890.6" y="265.2" width="1.2" height="1.2" fill="#9a9a9a"/><rect x="893.4" y="265.2" width="1.2" height="1.2" fill="#9a9a9a"/>
<rect x="890.6" y="268.1" width="1.2" height="1.2" fill="#9a9a9a"/><rect x="893.4" y="268.1" width="1.2" height="1.2" fill="#9a9a9a"/>
<rect x="890.6" y="270.9" width="1.2" height="1.2" fill="#9a9a9a"/><rect x="893.4" y="270.9" width="1.2" height="1.2" fill="#9a9a9a"/>
</svg>
<div id="ng">
<svg width="1449" height="633" viewBox="0 0 1449 633">
<defs><linearGradient id="ng_grad" x1="0" y1="0" x2="0" y2="1"><stop offset="0" stop-color="#dcdcdc"/><stop offset="1" stop-color="#c4c4c4"/></linearGradient></defs>
<path d="M975.5,-2 L975.5,19" fill="none" stroke="#5a8ac6" stroke-width="1.1"/>
<path d="M977,-2 Q979,1.6 990,1.6 L1055,1.6 Q1065,1.8 1065.2,10" fill="none" stroke="#5a8ac6" stroke-width="1.1"/>
<path d="M977,-2 Q982,4.5 996,5 L1168,16.5 Q1184,18.5 1185.6,29" fill="none" stroke="#5a8ac6" stroke-width="1.1"/>
<path d="M975.5,39.8 L966.7,68" fill="none" stroke="#5a8ac6" stroke-width="1.1"/>
<path d="M1065.2,30.1 L1056.4,58.4" fill="none" stroke="#5a8ac6" stroke-width="1.1"/>
<path d="M1185.7,49.4 L1176.8,77.7" fill="none" stroke="#5a8ac6" stroke-width="1.1"/>
<path d="M975.4,88 C975.6,100 985,108 995,120 L1055.6,208.5" fill="none" stroke="#5a8ac6" stroke-width="1.1"/>
<path d="M1065.2,78.5 L1065.2,208" fill="none" stroke="#5a8ac6" stroke-width="1.1"/>
<path d="M1185.7,97.6 C1185.5,108 1178,112 1168,120 L1075.8,207.5" fill="none" stroke="#5a8ac6" stroke-width="1.1"/>
<path d="M1065.3,234 L1069.4,243 C1070.5,245.5 1072.5,246.8 1076,248 L1185,281.5 C1212,289.5 1221.5,289 1221.7,299" fill="none" stroke="#5a8ac6" stroke-width="1.1"/>
<path d="M1065.3,234 L1208.6,551.5" fill="none" stroke="#5a8ac6" stroke-width="1.1"/>
<path d="M1295,413 L1221.6,551.5" fill="none" stroke="#5a8ac6" stroke-width="1.1"/>
<path d="M1221.7,319.7 L1225,340.7" fill="none" stroke="#5a8ac6" stroke-width="1.1"/>
<path d="M1238.2,361.4 Q1238,371 1252,374 L1275,379 Q1286,382 1286.5,393" fill="none" stroke="#5a8ac6" stroke-width="1.1"/>
<path d="M1355.2,371.5 Q1354,381 1340,382 L1318,383 Q1304,384 1303.8,393" fill="none" stroke="#5a8ac6" stroke-width="1.1" stroke-dasharray="2.5,2.5"/>
<path d="M1355.2,323.5 L1355.2,351.3" fill="none" stroke="#5a8ac6" stroke-width="1.1"/>
<path d="M1214.6,577.2 L1214.6,603.5" fill="none" stroke="#5a8ac6" stroke-width="1.1"/>
<path d="M1214.6,623.5 L1214.6,640" fill="none" stroke="#5a8ac6" stroke-width="1.1"/>
<circle cx="1295.2" cy="403" r="30.6" fill="#476da4"/>
<circle cx="1295.1" cy="403.1" r="20" fill="#9877c6"/>
<path d="M1275,379 Q1286,382 1286.5,393" fill="none" stroke="#5a8ac6" stroke-width="1.1"/>
<path d="M1318,383 Q1304,384 1303.8,393" fill="none" stroke="#5a8ac6" stroke-width="1.1" stroke-dasharray="2.5,2.5"/>
<path d="M1295,413 L1280,441" fill="none" stroke="#5a8ac6" stroke-width="1.1"/>
<rect x="953.5" y="22.8" width="44" height="14.2" rx="3" fill="url(#ng_grad)" stroke="#a3a3a3" stroke-width="0.7"/>
<line x1="959.5" y1="35.2" x2="961.0" y2="24.6" stroke="#777777" stroke-width="0.95"/>
<line x1="965.5" y1="35.2" x2="967.0" y2="24.6" stroke="#777777" stroke-width="0.95"/>
<line x1="985.0" y1="35.2" x2="986.5" y2="24.6" stroke="#777777" stroke-width="0.95"/>
<line x1="991.0" y1="35.2" x2="992.5" y2="24.6" stroke="#777777" stroke-width="0.95"/>
<path d="M970.3,33.8 L973.3,29.0 L977.9,29.0 L980.9,33.8Z" fill="#e8892c"/><path d="M972.5,29.5 L973.0,26.0 L974.3,28.5 L975.2,25.4 L976.5,28.4 L977.9,25.8 L978.3,29.5Z" fill="#c0402a" opacity="0.85"/>
<circle cx="975.5" cy="19.9" r="2.4" fill="#c6c6c6"/>
<circle cx="975.5" cy="39.8" r="2.4" fill="#c6c6c6"/>
<rect x="1043.2" y="13.2" width="44" height="14.0" rx="3" fill="url(#ng_grad)" stroke="#a3a3a3" stroke-width="0.7"/>
<line x1="1049.2" y1="25.4" x2="1050.7" y2="15.0" stroke="#777777" stroke-width="0.95"/>
<line x1="1055.2" y1="25.4" x2="1056.7" y2="15.0" stroke="#777777" stroke-width="0.95"/>
<line x1="1074.7" y1="25.4" x2="1076.2" y2="15.0" stroke="#777777" stroke-width="0.95"/>
<line x1="1080.7" y1="25.4" x2="1082.2" y2="15.0" stroke="#777777" stroke-width="0.95"/>
<path d="M1060.0,24.3 L1063.0,19.5 L1067.6,19.5 L1070.6,24.3Z" fill="#e8892c"/><path d="M1062.2,20.0 L1062.7,16.5 L1064.0,19.0 L1064.9,15.9 L1066.2,18.9 L1067.6,16.3 L1068.0,20.0Z" fill="#c0402a" opacity="0.85"/>
<circle cx="1065.2" cy="9.9" r="2.4" fill="#c6c6c6"/>
<circle cx="1065.2" cy="30.1" r="2.4" fill="#c6c6c6"/>
<rect x="1163.8" y="32.3" width="44" height="14.7" rx="3" fill="url(#ng_grad)" stroke="#a3a3a3" stroke-width="0.7"/>
<line x1="1169.8" y1="45.2" x2="1171.3" y2="34.1" stroke="#777777" stroke-width="0.95"/>
<line x1="1175.8" y1="45.2" x2="1177.3" y2="34.1" stroke="#777777" stroke-width="0.95"/>
<line x1="1195.3" y1="45.2" x2="1196.8" y2="34.1" stroke="#777777" stroke-width="0.95"/>
<line x1="1201.3" y1="45.2" x2="1202.8" y2="34.1" stroke="#777777" stroke-width="0.95"/>
<path d="M1180.6,43.6 L1183.6,38.8 L1188.2,38.8 L1191.2,43.6Z" fill="#e8892c"/><path d="M1182.8,39.3 L1183.3,35.8 L1184.6,38.3 L1185.5,35.2 L1186.8,38.2 L1188.2,35.6 L1188.6,39.3Z" fill="#c0402a" opacity="0.85"/>
<circle cx="1185.8" cy="29.5" r="2.4" fill="#c6c6c6"/>
<circle cx="1185.8" cy="49.4" r="2.4" fill="#c6c6c6"/>
<rect x="953.4" y="71.0" width="44" height="14.0" rx="3" fill="url(#ng_grad)" stroke="#a3a3a3" stroke-width="0.7"/>
<line x1="959.4" y1="83.2" x2="960.9" y2="72.8" stroke="#777777" stroke-width="0.95"/>
<line x1="965.4" y1="83.2" x2="966.9" y2="72.8" stroke="#777777" stroke-width="0.95"/>
<line x1="984.9" y1="83.2" x2="986.4" y2="72.8" stroke="#777777" stroke-width="0.95"/>
<line x1="990.9" y1="83.2" x2="992.4" y2="72.8" stroke="#777777" stroke-width="0.95"/>
<circle cx="975.4" cy="78.0" r="4.6" fill="#f6e8cf" stroke="#d9a561" stroke-width="0.9"/>
<circle cx="966.7" cy="68.0" r="2.4" fill="#c6c6c6"/>
<circle cx="984.1" cy="68.0" r="2.4" fill="#c6c6c6"/>
<circle cx="975.4" cy="88.1" r="2.4" fill="#c6c6c6"/>
<rect x="1043.2" y="61.4" width="44" height="14.3" rx="3" fill="url(#ng_grad)" stroke="#a3a3a3" stroke-width="0.7"/>
<line x1="1049.2" y1="73.9" x2="1050.7" y2="63.2" stroke="#777777" stroke-width="0.95"/>
<line x1="1055.2" y1="73.9" x2="1056.7" y2="63.2" stroke="#777777" stroke-width="0.95"/>
<line x1="1074.7" y1="73.9" x2="1076.2" y2="63.2" stroke="#777777" stroke-width="0.95"/>
<line x1="1080.7" y1="73.9" x2="1082.2" y2="63.2" stroke="#777777" stroke-width="0.95"/>
<circle cx="1065.2" cy="68.5" r="4.6" fill="#f6e8cf" stroke="#d9a561" stroke-width="0.9"/>
<circle cx="1056.4" cy="58.4" r="2.4" fill="#c6c6c6"/>
<circle cx="1073.8" cy="58.4" r="2.4" fill="#c6c6c6"/>
<circle cx="1065.2" cy="78.5" r="2.4" fill="#c6c6c6"/>
<rect x="1163.8" y="80.6" width="44" height="14.6" rx="3" fill="url(#ng_grad)" stroke="#a3a3a3" stroke-width="0.7"/>
<line x1="1169.8" y1="93.4" x2="1171.3" y2="82.4" stroke="#777777" stroke-width="0.95"/>
<line x1="1175.8" y1="93.4" x2="1177.3" y2="82.4" stroke="#777777" stroke-width="0.95"/>
<line x1="1195.3" y1="93.4" x2="1196.8" y2="82.4" stroke="#777777" stroke-width="0.95"/>
<line x1="1201.3" y1="93.4" x2="1202.8" y2="82.4" stroke="#777777" stroke-width="0.95"/>
<circle cx="1185.8" cy="88.0" r="4.6" fill="#f6e8cf" stroke="#d9a561" stroke-width="0.9"/>
<circle cx="1176.8" cy="77.7" r="2.4" fill="#c6c6c6"/>
<circle cx="1194.2" cy="77.7" r="2.4" fill="#c6c6c6"/>
<circle cx="1185.8" cy="97.6" r="2.4" fill="#c6c6c6"/>
<path d="M1047.7,212.9 Q1047.2,208.2 1065.2,208.2 Q1083.2,208.2 1082.7,212.9 Q1065.2,215.2 1047.7,212.9Z" fill="#c8c8c8" stroke="#9e9e9e" stroke-width="0.6"/>
<path d="M1043.2,222.7 C1043.2,214.8 1049.2,214.8 1065.2,214.8 C1081.2,214.8 1087.2,214.8 1087.2,222.7 C1087.2,230.6 1081.2,230.6 1065.2,230.6 C1049.2,230.6 1043.2,230.6 1043.2,222.7Z" fill="url(#ng_grad)" stroke="#a0a0a0" stroke-width="0.7"/>
<line x1="1049.2" y1="228.2" x2="1050.7" y2="217.2" stroke="#777777" stroke-width="0.95"/>
<line x1="1055.2" y1="228.2" x2="1056.7" y2="217.2" stroke="#777777" stroke-width="0.95"/>
<line x1="1074.7" y1="228.2" x2="1076.2" y2="217.2" stroke="#777777" stroke-width="0.95"/>
<line x1="1080.7" y1="228.2" x2="1082.2" y2="217.2" stroke="#777777" stroke-width="0.95"/>
<path d="M1061.2,218.0 L1068.7,221.5 L1062.2,227.0 L1066.2,222.5Z" fill="#e4e4e4" stroke="#9a9a9a" stroke-width="0.5"/><circle cx="1064.2" cy="219.5" r="1.2" fill="#b23a3a"/><circle cx="1065.7" cy="225.0" r="1.2" fill="#b23a3a"/>
<circle cx="1065.2" cy="234.0" r="2.4" fill="#c6c6c6"/>
<rect x="1199.9" y="302.2" width="44" height="14.5" rx="3" fill="url(#ng_grad)" stroke="#a3a3a3" stroke-width="0.7"/>
<line x1="1205.9" y1="314.9" x2="1207.4" y2="304.0" stroke="#777777" stroke-width="0.95"/>
<line x1="1211.9" y1="314.9" x2="1213.4" y2="304.0" stroke="#777777" stroke-width="0.95"/>
<line x1="1231.4" y1="314.9" x2="1232.9" y2="304.0" stroke="#777777" stroke-width="0.95"/>
<line x1="1237.4" y1="314.9" x2="1238.9" y2="304.0" stroke="#777777" stroke-width="0.95"/>
<path d="M1216.9,310.5 Q1219.9,305.5 1222.9,307.5 L1225.9,306.5 L1224.9,310.5Z" fill="#4f86c8"/><path d="M1217.9,312.5 L1226.9,310.5 L1223.9,313.5Z" fill="#3f6fb0"/>
<circle cx="1221.7" cy="299.0" r="2.4" fill="#c6c6c6"/>
<circle cx="1221.9" cy="319.7" r="2.4" fill="#c6c6c6"/>
<path d="M1217.8,346.0 L1262.8,346.0 L1260.8,360.4 L1215.8,360.4Z" fill="#e8e8e8"/>
<path d="M1218.8,344.5 L1261.8,344.5 Q1262.3,344.5 1261.8,345.5 L1259.8,358.4 L1216.3,358.4 L1218.3,345.5Z" fill="url(#ng_grad)" stroke="#a0a0a0" stroke-width="0.7"/>
<line x1="1221.8" y1="357.1" x2="1223.3" y2="346.3" stroke="#777777" stroke-width="0.95"/>
<line x1="1227.8" y1="357.1" x2="1229.3" y2="346.3" stroke="#777777" stroke-width="0.95"/>
<line x1="1247.3" y1="357.1" x2="1248.8" y2="346.3" stroke="#777777" stroke-width="0.95"/>
<line x1="1253.3" y1="357.1" x2="1254.8" y2="346.3" stroke="#777777" stroke-width="0.95"/>
<path d="M1235.2,346.5 L1241.2,346.5 L1238.2,351.5Z" fill="#d06a5a"/><circle cx="1237.2" cy="354.0" r="2.2" fill="none" stroke="#707070" stroke-width="1"/>
<circle cx="1225.0" cy="340.7" r="2.4" fill="#c6c6c6"/>
<circle cx="1233.6" cy="340.7" r="2.4" fill="#c6c6c6"/>
<circle cx="1242.2" cy="340.7" r="2.4" fill="#c6c6c6"/>
<circle cx="1250.8" cy="340.7" r="2.4" fill="#c6c6c6"/>
<circle cx="1238.8" cy="361.4" r="2.4" fill="#c6c6c6"/>
<rect x="1333.3" y="306.0" width="44" height="14.0" rx="3" fill="url(#ng_grad)" stroke="#a3a3a3" stroke-width="0.7"/>
<line x1="1339.3" y1="318.2" x2="1340.8" y2="307.8" stroke="#777777" stroke-width="0.95"/>
<line x1="1345.3" y1="318.2" x2="1346.8" y2="307.8" stroke="#777777" stroke-width="0.95"/>
<line x1="1364.8" y1="318.2" x2="1366.3" y2="307.8" stroke="#777777" stroke-width="0.95"/>
<line x1="1370.8" y1="318.2" x2="1372.3" y2="307.8" stroke="#777777" stroke-width="0.95"/>
<path d="M1351.3,315.0 Q1352.3,311.0 1355.3,311.0 Q1358.3,311.0 1359.3,315.0Z" fill="#f0f0f0" stroke="#8a8a8a" stroke-width="0.6"/>
<circle cx="1355.3" cy="323.5" r="2.4" fill="#c6c6c6"/>
<rect x="1331.2" y="352.3" width="48.2" height="18.6" rx="4" fill="#d8a8a8"/>
<rect x="1332.8" y="353.9" width="45" height="15.4" rx="3" fill="#141414"/>
<rect x="1334.3" y="354.8" width="42" height="13.6" rx="3" fill="url(#ng_grad)" stroke="#a3a3a3" stroke-width="0.7"/>
<line x1="1340.3" y1="366.6" x2="1341.8" y2="356.6" stroke="#777777" stroke-width="0.95"/>
<line x1="1346.3" y1="366.6" x2="1347.8" y2="356.6" stroke="#777777" stroke-width="0.95"/>
<line x1="1365.8" y1="366.6" x2="1367.3" y2="356.6" stroke="#777777" stroke-width="0.95"/>
<line x1="1371.8" y1="366.6" x2="1373.3" y2="356.6" stroke="#777777" stroke-width="0.95"/>
<path d="M1350.3,362.5 Q1353.3,357.5 1356.3,359.5 L1359.3,358.5 L1358.3,362.5Z" fill="#4f86c8"/><path d="M1351.3,364.5 L1360.3,362.5 L1357.3,365.5Z" fill="#3f6fb0"/>
<circle cx="1355.2" cy="351.3" r="2.4" fill="#c6c6c6"/>
<circle cx="1355.3" cy="371.5" r="2.4" fill="#c6c6c6"/>
<rect x="1272.9" y="396.2" width="44" height="13.4" rx="3" fill="url(#ng_grad)" stroke="#a3a3a3" stroke-width="0.7"/>
<line x1="1278.9" y1="407.8" x2="1280.4" y2="398.0" stroke="#777777" stroke-width="0.95"/>
<line x1="1284.9" y1="407.8" x2="1286.4" y2="398.0" stroke="#777777" stroke-width="0.95"/>
<line x1="1304.4" y1="407.8" x2="1305.9" y2="398.0" stroke="#777777" stroke-width="0.95"/>
<line x1="1310.4" y1="407.8" x2="1311.9" y2="398.0" stroke="#777777" stroke-width="0.95"/>
<rect x="1289.0" y="398.0" width="5.5" height="7" fill="#8aa0b8" stroke="#6a6a6a" stroke-width="0.5"/><path d="M1293.5,408.0 L1295.0,402.0 L1299.0,408.0Z" fill="#d8c8c8" stroke="#a06060" stroke-width="0.5"/>
<circle cx="1286.5" cy="393.1" r="2.4" fill="#c6c6c6"/>
<circle cx="1303.6" cy="393.1" r="2.4" fill="#c6c6c6"/>
<circle cx="1294.9" cy="413.1" r="2.4" fill="#c6c6c6"/>
<rect x="1311" y="397.3" width="5.2" height="11.8" rx="1.5" fill="#0aa8ec"/>
<path d="M1196.8,555.2 Q1196.3,550.5 1214.3,550.5 Q1232.3,550.5 1231.8,555.2 Q1214.3,557.5 1196.8,555.2Z" fill="#c8c8c8" stroke="#9e9e9e" stroke-width="0.6"/>
<path d="M1192.3,565.4 C1192.3,557.1 1198.3,557.1 1214.3,557.1 C1230.3,557.1 1236.3,557.1 1236.3,565.4 C1236.3,573.7 1230.3,573.7 1214.3,573.7 C1198.3,573.7 1192.3,573.7 1192.3,565.4Z" fill="url(#ng_grad)" stroke="#a0a0a0" stroke-width="0.7"/>
<line x1="1198.3" y1="571.3" x2="1199.8" y2="559.5" stroke="#777777" stroke-width="0.95"/>
<line x1="1204.3" y1="571.3" x2="1205.8" y2="559.5" stroke="#777777" stroke-width="0.95"/>
<line x1="1223.8" y1="571.3" x2="1225.3" y2="559.5" stroke="#777777" stroke-width="0.95"/>
<line x1="1229.8" y1="571.3" x2="1231.3" y2="559.5" stroke="#777777" stroke-width="0.95"/>
<path d="M1210.3,560.5 L1217.8,564.0 L1211.3,569.5 L1215.3,565.0Z" fill="#e4e4e4" stroke="#9a9a9a" stroke-width="0.5"/><circle cx="1213.3" cy="562.0" r="1.2" fill="#b23a3a"/><circle cx="1214.8" cy="567.5" r="1.2" fill="#b23a3a"/>
<circle cx="1214.3" cy="577.2" r="2.4" fill="#c6c6c6"/>
<rect x="1192.3" y="606.1" width="44" height="14.2" rx="3" fill="url(#ng_grad)" stroke="#a3a3a3" stroke-width="0.7"/>
<line x1="1198.3" y1="618.5" x2="1199.8" y2="607.9" stroke="#777777" stroke-width="0.95"/>
<line x1="1204.3" y1="618.5" x2="1205.8" y2="607.9" stroke="#777777" stroke-width="0.95"/>
<line x1="1223.8" y1="618.5" x2="1225.3" y2="607.9" stroke="#777777" stroke-width="0.95"/>
<line x1="1229.8" y1="618.5" x2="1231.3" y2="607.9" stroke="#777777" stroke-width="0.95"/>
<path d="M1209.3,614.0 Q1211.8,609.0 1214.3,613.0 Q1216.8,617.0 1219.3,612.0" fill="none" stroke="#b56a6a" stroke-width="0.9"/>
<circle cx="1214.6" cy="603.5" r="2.4" fill="#c6c6c6"/>
<circle cx="1214.3" cy="623.5" r="2.4" fill="#c6c6c6"/>
<text x="1001.6" y="32.2" class="lbl" textLength="25.1" lengthAdjust="spacingAndGlyphs">blast4</text>
<circle cx="1005.9" cy="38.9" r="2.6" fill="#1d2a12" stroke="#8fd35a" stroke-width="1.1"/><line x1="1005.0" y1="39.8" x2="1006.8" y2="38.0" stroke="#8fd35a" stroke-width="0.5"/>
<text x="1001" y="52.7" class="lblb" textLength="40.4" lengthAdjust="spacingAndGlyphs">@Cd.b&lt;0.4</text>
<text x="1091.7" y="22.9" class="lbl" textLength="25.3" lengthAdjust="spacingAndGlyphs">blast3</text>
<circle cx="1095.8" cy="29.8" r="2.6" fill="#1d2a12" stroke="#8fd35a" stroke-width="1.1"/><line x1="1094.9" y1="30.7" x2="1096.7" y2="28.9" stroke="#8fd35a" stroke-width="0.5"/>
<text x="1090.8" y="43.2" class="lblb" textLength="38.5" lengthAdjust="spacingAndGlyphs">@Cd.r&lt;0.4</text>
<text x="1211.5" y="42.7" class="lbl" textLength="25.5" lengthAdjust="spacingAndGlyphs">blast2</text>
<circle cx="1217.0" cy="48.9" r="2.6" fill="#1d2a12" stroke="#8fd35a" stroke-width="1.1"/><line x1="1216.1" y1="49.8" x2="1217.9" y2="48.0" stroke="#8fd35a" stroke-width="0.5"/>
<text x="1211" y="62.8" class="lblb" textLength="39.7" lengthAdjust="spacingAndGlyphs">@Cd.g&lt;0.4</text>
<text x="1000.9" y="69.8" class="lblg" textLength="49" lengthAdjust="spacingAndGlyphs">Group Create</text>
<text x="1001.7" y="81" class="lbl" textLength="21.8" lengthAdjust="spacingAndGlyphs">BLUE</text>
<circle cx="1005.8" cy="87.8" r="2.6" fill="#1d2a12" stroke="#8fd35a" stroke-width="1.1"/><line x1="1004.9" y1="88.7" x2="1006.7" y2="86.9" stroke="#8fd35a" stroke-width="0.5"/>
<text x="1001.7" y="101" class="lblb" textLength="19" lengthAdjust="spacingAndGlyphs">BLUE</text>
<text x="1091" y="60.2" class="lblg" textLength="49" lengthAdjust="spacingAndGlyphs">Group Create</text>
<text x="1091.5" y="71" class="lbl" textLength="16.5" lengthAdjust="spacingAndGlyphs">RED</text>
<circle cx="1095.9" cy="77.9" r="2.6" fill="#1d2a12" stroke="#8fd35a" stroke-width="1.1"/><line x1="1095.0" y1="78.8" x2="1096.8" y2="77.0" stroke="#8fd35a" stroke-width="0.5"/>
<text x="1091.5" y="91" class="lblb" textLength="14.3" lengthAdjust="spacingAndGlyphs">RED</text>
<text x="1211" y="79.8" class="lblg" textLength="49" lengthAdjust="spacingAndGlyphs">Group Create</text>
<text x="1211.5" y="90" class="lbl" textLength="28.8" lengthAdjust="spacingAndGlyphs">GREEN</text>
<circle cx="1217.0" cy="97.0" r="2.6" fill="#1d2a12" stroke="#8fd35a" stroke-width="1.1"/><line x1="1216.1" y1="97.9" x2="1217.9" y2="96.1" stroke="#8fd35a" stroke-width="0.5"/>
<text x="1211.5" y="111" class="lblb" textLength="24.5" lengthAdjust="spacingAndGlyphs">GREEN</text>
<text x="1091.6" y="225.5" class="lbl" textLength="31.6" lengthAdjust="spacingAndGlyphs">merge3</text>
<circle cx="1096.0" cy="231.8" r="2.6" fill="#1d2a12" stroke="#8fd35a" stroke-width="1.1"/><line x1="1095.1" y1="232.7" x2="1096.9" y2="230.9" stroke="#8fd35a" stroke-width="0.5"/>
<text x="1247.8" y="301.5" class="lblg" textLength="37.9" lengthAdjust="spacingAndGlyphs">Transform</text>
<text x="1247.8" y="312.2" class="lbl" textLength="21.2" lengthAdjust="spacingAndGlyphs">pivot</text>
<circle cx="1252.8" cy="319.2" r="2.6" fill="#1d2a12" stroke="#8fd35a" stroke-width="1.1"/><line x1="1251.9" y1="320.1" x2="1253.7" y2="318.3" stroke="#8fd35a" stroke-width="0.5"/>
<text x="1265.5" y="353" class="lbl" textLength="44.7" lengthAdjust="spacingAndGlyphs">attribvop5</text>
<circle cx="1280.4" cy="360.4" r="2.6" fill="#1d2a12" stroke="#8fd35a" stroke-width="1.1"/><line x1="1279.5" y1="361.3" x2="1281.3" y2="359.5" stroke="#8fd35a" stroke-width="0.5"/>
<path d="M1266.5,363 L1269.5,357.5 L1273,363Z" fill="none" stroke="#7fbf4f" stroke-width="0.8"/>
<text x="1381.5" y="316.5" class="lbl" textLength="21" lengthAdjust="spacingAndGlyphs">grid2</text>
<text x="1381.5" y="364.5" class="lbl" textLength="47.5" lengthAdjust="spacingAndGlyphs">transform3</text>
<text x="1321.6" y="405.5" class="lbl" textLength="17.7" lengthAdjust="spacingAndGlyphs">ray2</text>
<circle cx="1325.9" cy="412.7" r="2.6" fill="#1d2a12" stroke="#8fd35a" stroke-width="1.1"/><line x1="1325.0" y1="413.6" x2="1326.8" y2="411.8" stroke="#8fd35a" stroke-width="0.5"/>
<text x="1240.3" y="569" class="lbl" textLength="32" lengthAdjust="spacingAndGlyphs">merge4</text>
<circle cx="1244.8" cy="575.0" r="2.6" fill="#1d2a12" stroke="#8fd35a" stroke-width="1.1"/><line x1="1243.9" y1="575.9" x2="1245.7" y2="574.1" stroke="#8fd35a" stroke-width="0.5"/>
<text x="1240.3" y="616.3" class="lbl" textLength="21.1" lengthAdjust="spacingAndGlyphs">add2</text>
<circle cx="1244.8" cy="623.0" r="2.6" fill="#1d2a12" stroke="#8fd35a" stroke-width="1.1"/><line x1="1243.9" y1="623.9" x2="1245.7" y2="622.1" stroke="#8fd35a" stroke-width="0.5"/>
</svg>
</div>
</body></html>
